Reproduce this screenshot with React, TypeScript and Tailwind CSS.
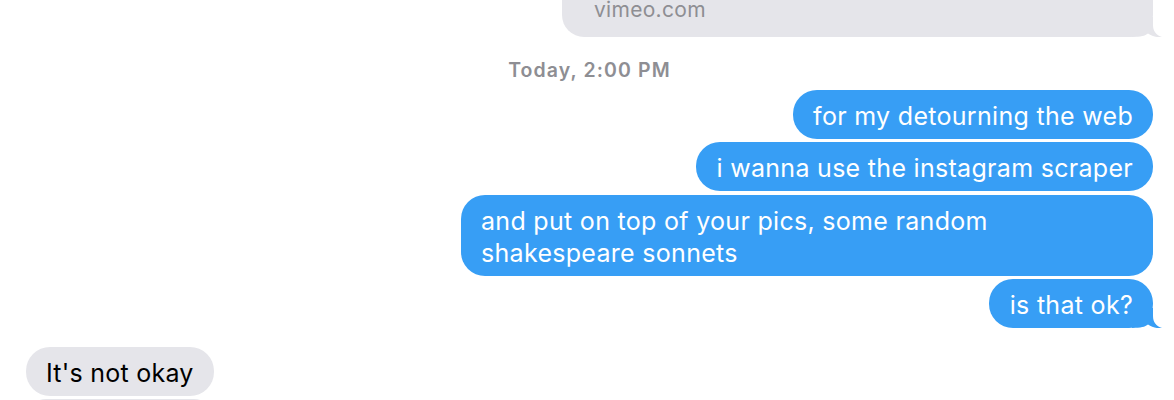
import React from "react";

const Tail = ({ color }: { color: string }) => (
  <svg
    className="absolute right-[-9px] bottom-0"
    width="30"
    height="20"
    viewBox="0 0 30 20"
  >
    <path
      d="M0 20 L0 0 L21 0 L21 8 C21 14 24 18 30 20 C25 20.6 20 19.4 16 16.6 C13 19 9 20 0 20 Z"
      fill={color}
    />
  </svg>
);

const Sent = ({ children, tail, className = "" }: { children: React.ReactNode; tail?: boolean; className?: string }) => (
  <div className={`relative shrink-0 self-end max-w-[692px] rounded-[24px] bg-[#379ef5] px-[20px] pt-[10px] pb-[7px] text-[25px] leading-[32px] tracking-[0.3px] text-white ${className}`}>
    {children}
    {tail && <Tail color="#379ef5" />}
  </div>
);

export default function App() {
  return (
    <div
      className="flex h-[400px] w-[1174px] flex-col overflow-hidden bg-white pl-[26px] pr-[21px]"
      style={{ fontFamily: "Inter, 'Noto Sans', sans-serif" }}
    >
      {/* link preview footer, cut off at top */}
      <div className="relative mt-[-20px] h-[57px] w-[591px] shrink-0 self-end rounded-b-[22px] bg-[#e5e5ea] pl-[32px] pt-[20px] text-[21px] leading-[20px] tracking-[0.3px] text-[#8e8e93]">
        vimeo.com
        <Tail color="#e5e5ea" />
      </div>

      <div className="mt-[19px] shrink-0 text-center text-[19.5px] font-semibold leading-[28px] tracking-[1.1px] text-[#8e8e93]">
        Today, 2:00 PM
      </div>

      <Sent className="mt-[6px]">for my detourning the web</Sent>
      <Sent className="mt-[3px]">i wanna use the instagram scraper</Sent>
      <Sent className="mt-[4px] w-[692px]">
        and put on top of your pics, some random shakespeare sonnets
      </Sent>
      <Sent className="mt-[3px] pl-[21px]" tail>
        is that ok?
      </Sent>

      <div className="mt-[19px] shrink-0 self-start rounded-[24px] bg-[#e5e5ea] px-[20px] pt-[10px] pb-[7px] text-[25px] leading-[32px] tracking-[0.25px] text-black">
        It's not okay
      </div>
      <div className="mt-[3px] h-[40px] w-[188px] shrink-0 self-start rounded-[24px] bg-[#e5e5ea]" />
    </div>
  );
}
